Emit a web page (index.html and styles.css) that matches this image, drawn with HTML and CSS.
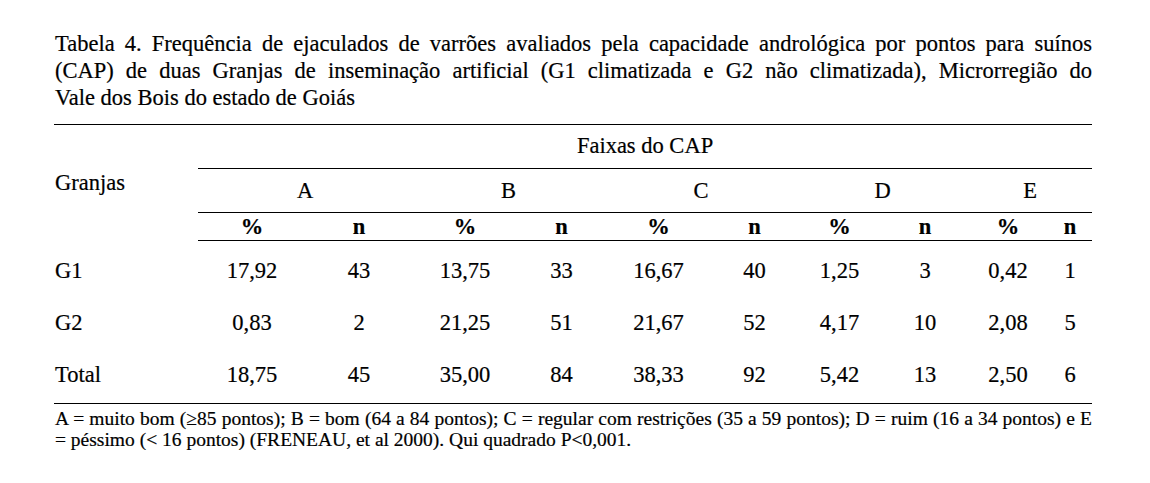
FILE: index.html
```html
<!DOCTYPE html>
<html lang="pt">
<head>
<meta charset="utf-8">
<title>Tabela 4</title>
<link rel="stylesheet" href="styles.css">
</head>
<body>
<div class="page">
  <p class="caption"><span class="just">Tabela 4. Frequência de ejaculados de varrões avaliados pela capacidade andrológica por pontos para suínos (CAP) de duas Granjas de inseminação artificial (G1 climatizada e G2 não climatizada), Microrregião do</span><span class="tail">Vale dos Bois do estado de Goiás</span></p>
  <table class="data">
    <colgroup>
      <col class="c-g">
      <col class="c-ap"><col class="c-an">
      <col class="c-bp"><col class="c-bn">
      <col class="c-cp"><col class="c-cn">
      <col class="c-dp"><col class="c-dn">
      <col class="c-ep"><col class="c-en">
    </colgroup>
    <thead>
      <tr class="h1">
        <th class="granjas" rowspan="3">Granjas</th>
        <th class="group" colspan="10">Faixas do CAP</th>
      </tr>
      <tr class="h2">
        <th colspan="2">A</th>
        <th colspan="2">B</th>
        <th colspan="2">C</th>
        <th colspan="2">D</th>
        <th colspan="2">E</th>
      </tr>
      <tr class="h3">
        <th>%</th><th>n</th>
        <th>%</th><th>n</th>
        <th>%</th><th>n</th>
        <th>%</th><th>n</th>
        <th>%</th><th>n</th>
      </tr>
    </thead>
    <tbody>
      <tr>
        <td class="name">G1</td>
        <td>17,92</td><td>43</td>
        <td>13,75</td><td>33</td>
        <td>16,67</td><td>40</td>
        <td>1,25</td><td>3</td>
        <td>0,42</td><td>1</td>
      </tr>
      <tr>
        <td class="name">G2</td>
        <td>0,83</td><td>2</td>
        <td>21,25</td><td>51</td>
        <td>21,67</td><td>52</td>
        <td>4,17</td><td>10</td>
        <td>2,08</td><td>5</td>
      </tr>
      <tr class="last">
        <td class="name">Total</td>
        <td>18,75</td><td>45</td>
        <td>35,00</td><td>84</td>
        <td>38,33</td><td>92</td>
        <td>5,42</td><td>13</td>
        <td>2,50</td><td>6</td>
      </tr>
    </tbody>
  </table>
  <p class="note"><span class="just">A = muito bom (≥85 pontos); B = bom (64 a 84 pontos); C = regular com restrições (35 a 59 pontos); D = ruim (16 a 34 pontos) e E</span><span class="tail">= péssimo (&lt; 16 pontos) (FRENEAU, et al 2000). Qui quadrado P&lt;0,001.</span></p>
</div>
</body>
</html>
```

FILE: styles.css
```css
html, body {
  margin: 0;
  padding: 0;
  background: #ffffff;
}

body {
  font-family: "Liberation Serif", "Times New Roman", serif;
  color: #000000;
  -webkit-text-stroke: 0.2px #000;
}

.page {
  width: 1038px;
  padding: 30px 0 0 54px;
}

.caption {
  margin: 0 0 0 1px;
  font-size: 22.5px;
  line-height: 27px;
}

.just {
  display: block;
  text-align: justify;
  text-align-last: justify;
}

.tail {
  display: block;
  text-align: left;
}

.data {
  margin-top: 13px;
  width: 1038px;
  border-collapse: collapse;
  table-layout: fixed;
  font-size: 22.5px;
  border-top: 1px solid #000;
  border-bottom: 1px solid #000;
}

.c-g { width: 144px; }
.c-ap { width: 108px; }
.c-an { width: 106px; }
.c-bp { width: 106px; }
.c-bn { width: 87px; }
.c-cp { width: 107px; }
.c-cn { width: 85px; }
.c-dp { width: 85px; }
.c-dn { width: 86px; }
.c-ep { width: 80px; }
.c-en { width: 44px; }

.data th,
.data td {
  padding: 0;
  font-weight: normal;
  text-align: center;
  vertical-align: top;
  line-height: 24px;
}

.data th.granjas {
  text-align: left;
  padding: 46px 0 0 1px;
}

.h1 th.group {
  padding: 9px 0 10px;
  border-bottom: 1px solid #000;
}

.h2 th {
  padding: 10px 0 9px;
  border-bottom: 1px solid #000;
}

.h3 th {
  padding: 2px 0 1px;
  font-weight: bold;
  border-bottom: 1px solid #000;
}

.data tbody td {
  padding: 18px 0 10px;
}

.data tbody tr.last td {
  padding-bottom: 16px;
}

.data td.name {
  text-align: left;
  padding-left: 1px;
}

.note {
  margin: 4px 0 0 1px;
  font-size: 19.5px;
  line-height: 21px;
}
```
